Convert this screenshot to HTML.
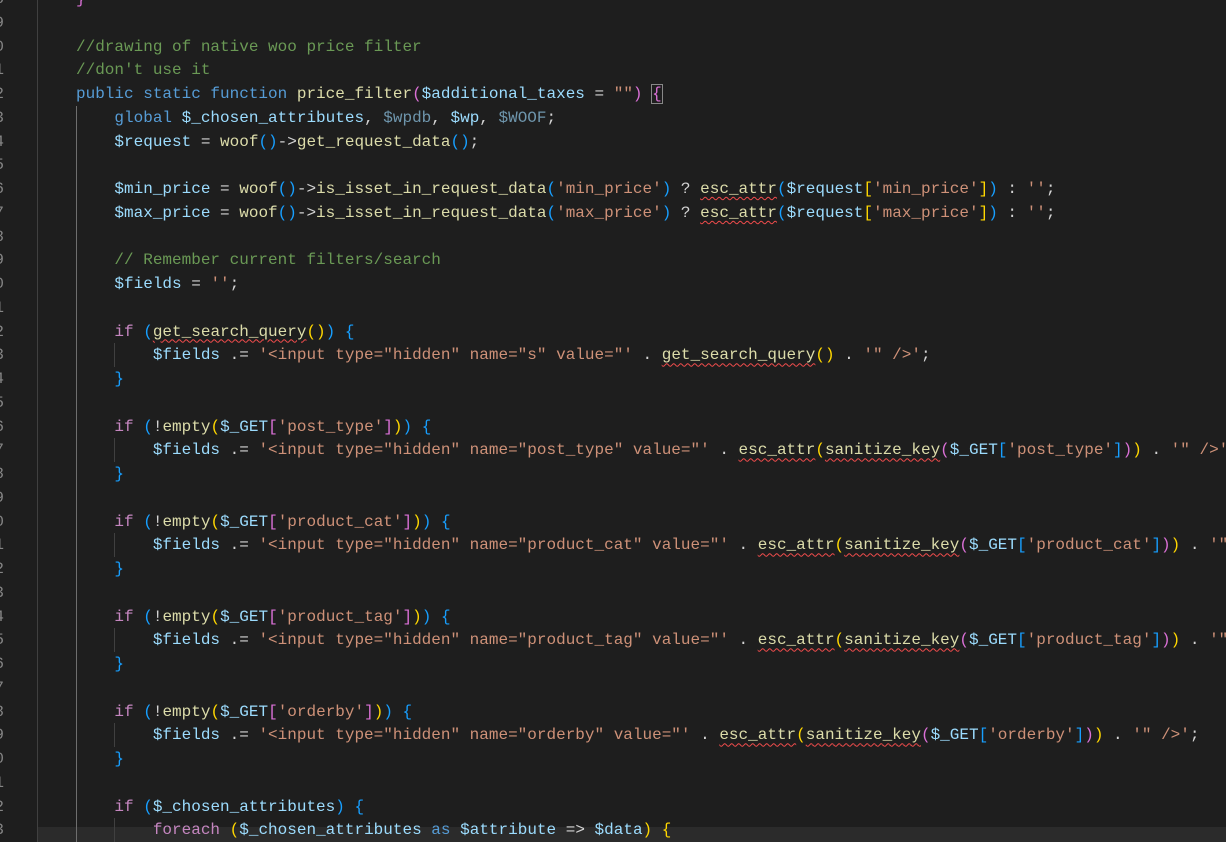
<!DOCTYPE html>
<html><head><meta charset="utf-8"><style>
html,body{margin:0;padding:0;background:#1e1e1e;width:1226px;height:842px;overflow:hidden}
body{font-family:"Liberation Mono",monospace;font-size:16px;}
#w{position:relative;width:1226px;height:842px;}
.r{position:absolute;left:37.6px;margin-top:1.5px;height:23.75px;line-height:23.75px;white-space:pre;color:#d4d4d4;font-family:"Liberation Mono",monospace;font-size:16px}
.n{position:absolute;left:-30px;margin-top:1.5px;width:34px;text-align:right;height:23.75px;line-height:23.75px;color:#858585;font-family:"Liberation Mono",monospace;font-size:16px}
.g{position:absolute;width:1px;background:#404040}
.c{color:#6a9955}.k{color:#569cd6}.f{color:#dcdcaa}.v{color:#9cdcfe}.d{color:#6f96ad}.s{color:#ce9178}.p{color:#c586c0}
.b1{color:#ffd700}.b2{color:#da70d6}.b3{color:#179fff}
.e{text-decoration:underline wavy #f14c4c;text-decoration-thickness:1px;text-underline-offset:3px}
.hl{position:absolute;left:37px;top:827px;width:1189px;height:24px;background:#2b2b2b}
.box{outline:1px solid #888;}
</style></head><body><div id="w">
<div class="hl"></div>
<div class="g" style="left:37px;top:0;height:842px"></div>
<div class="g" style="left:76px;top:106px;height:736px;background:#6e6e6e"></div>
<div class="g" style="left:114px;top:343px;height:24px"></div>
<div class="g" style="left:114px;top:438px;height:24px"></div>
<div class="g" style="left:114px;top:533px;height:24px"></div>
<div class="g" style="left:114px;top:628px;height:24px"></div>
<div class="g" style="left:114px;top:723px;height:24px"></div>
<div class="g" style="left:114px;top:818px;height:24px"></div>

<div class="n" style="top:-13.4px">98</div>
<div class="n" style="top:10.35px">99</div>
<div class="n" style="top:34.1px">100</div>
<div class="n" style="top:57.85px">101</div>
<div class="n" style="top:81.6px">102</div>
<div class="n" style="top:105.35px">103</div>
<div class="n" style="top:129.1px">104</div>
<div class="n" style="top:152.85px">105</div>
<div class="n" style="top:176.6px">106</div>
<div class="n" style="top:200.35px">107</div>
<div class="n" style="top:224.1px">108</div>
<div class="n" style="top:247.85px">109</div>
<div class="n" style="top:271.6px">110</div>
<div class="n" style="top:295.35px">111</div>
<div class="n" style="top:319.1px">112</div>
<div class="n" style="top:342.85px">113</div>
<div class="n" style="top:366.6px">114</div>
<div class="n" style="top:390.35px">115</div>
<div class="n" style="top:414.1px">116</div>
<div class="n" style="top:437.85px">117</div>
<div class="n" style="top:461.6px">118</div>
<div class="n" style="top:485.35px">119</div>
<div class="n" style="top:509.1px">120</div>
<div class="n" style="top:532.85px">121</div>
<div class="n" style="top:556.6px">122</div>
<div class="n" style="top:580.35px">123</div>
<div class="n" style="top:604.1px">124</div>
<div class="n" style="top:627.85px">125</div>
<div class="n" style="top:651.6px">126</div>
<div class="n" style="top:675.35px">127</div>
<div class="n" style="top:699.1px">128</div>
<div class="n" style="top:722.85px">129</div>
<div class="n" style="top:746.6px">130</div>
<div class="n" style="top:770.35px">131</div>
<div class="n" style="top:794.1px">132</div>
<div class="n" style="top:817.85px">133</div>

<div class="r" style="top:-13.4px">    <span class="b2">}</span></div>
<div class="r" style="top:34.1px">    <span class="c">//drawing of native woo price filter</span></div>
<div class="r" style="top:57.85px">    <span class="c">//don't use it</span></div>
<div class="r" style="top:81.6px">    <span class="k">public static function</span> <span class="f">price_filter</span><span class="b2">(</span><span class="v">$additional_taxes</span> = <span class="s">""</span><span class="b2">)</span> <span class="b2 box">{</span></div>
<div class="r" style="top:105.35px">        <span class="k">global</span> <span class="v">$_chosen_attributes</span>, <span class="d">$wpdb</span>, <span class="v">$wp</span>, <span class="d">$WOOF</span>;</div>
<div class="r" style="top:129.1px">        <span class="v">$request</span> = <span class="f">woof</span><span class="b3">()</span>-&gt;<span class="f">get_request_data</span><span class="b3">()</span>;</div>
<div class="r" style="top:176.6px">        <span class="v">$min_price</span> = <span class="f">woof</span><span class="b3">()</span>-&gt;<span class="f">is_isset_in_request_data</span><span class="b3">(</span><span class="s">'min_price'</span><span class="b3">)</span> ? <span class="f e">esc_attr</span><span class="b3">(</span><span class="v">$request</span><span class="b1">[</span><span class="s">'min_price'</span><span class="b1">]</span><span class="b3">)</span> : <span class="s">''</span>;</div>
<div class="r" style="top:200.35px">        <span class="v">$max_price</span> = <span class="f">woof</span><span class="b3">()</span>-&gt;<span class="f">is_isset_in_request_data</span><span class="b3">(</span><span class="s">'max_price'</span><span class="b3">)</span> ? <span class="f e">esc_attr</span><span class="b3">(</span><span class="v">$request</span><span class="b1">[</span><span class="s">'max_price'</span><span class="b1">]</span><span class="b3">)</span> : <span class="s">''</span>;</div>
<div class="r" style="top:247.85px">        <span class="c">// Remember current filters/search</span></div>
<div class="r" style="top:271.6px">        <span class="v">$fields</span> = <span class="s">''</span>;</div>
<div class="r" style="top:319.1px">        <span class="p">if</span> <span class="b3">(</span><span class="f e">get_search_query</span><span class="b1">()</span><span class="b3">)</span> <span class="b3">{</span></div>
<div class="r" style="top:342.85px">            <span class="v">$fields</span> .= <span class="s">'&lt;input type="hidden" name="s" value="'</span> . <span class="f e">get_search_query</span><span class="b1">()</span> . <span class="s">'" /&gt;'</span>;</div>
<div class="r" style="top:366.6px">        <span class="b3">}</span></div>
<div class="r" style="top:414.1px">        <span class="p">if</span> <span class="b3">(</span>!<span class="f">empty</span><span class="b1">(</span><span class="v">$_GET</span><span class="b2">[</span><span class="s">'post_type'</span><span class="b2">]</span><span class="b1">)</span><span class="b3">)</span> <span class="b3">{</span></div>
<div class="r" style="top:437.85px">            <span class="v">$fields</span> .= <span class="s">'&lt;input type="hidden" name="post_type" value="'</span> . <span class="f e">esc_attr</span><span class="b1">(</span><span class="f e">sanitize_key</span><span class="b2">(</span><span class="v">$_GET</span><span class="b3">[</span><span class="s">'post_type'</span><span class="b3">]</span><span class="b2">)</span><span class="b1">)</span> . <span class="s">'" /&gt;'</span>;</div>
<div class="r" style="top:461.6px">        <span class="b3">}</span></div>
<div class="r" style="top:509.1px">        <span class="p">if</span> <span class="b3">(</span>!<span class="f">empty</span><span class="b1">(</span><span class="v">$_GET</span><span class="b2">[</span><span class="s">'product_cat'</span><span class="b2">]</span><span class="b1">)</span><span class="b3">)</span> <span class="b3">{</span></div>
<div class="r" style="top:532.85px">            <span class="v">$fields</span> .= <span class="s">'&lt;input type="hidden" name="product_cat" value="'</span> . <span class="f e">esc_attr</span><span class="b1">(</span><span class="f e">sanitize_key</span><span class="b2">(</span><span class="v">$_GET</span><span class="b3">[</span><span class="s">'product_cat'</span><span class="b3">]</span><span class="b2">)</span><span class="b1">)</span> . <span class="s">'" /&gt;'</span>;</div>
<div class="r" style="top:556.6px">        <span class="b3">}</span></div>
<div class="r" style="top:604.1px">        <span class="p">if</span> <span class="b3">(</span>!<span class="f">empty</span><span class="b1">(</span><span class="v">$_GET</span><span class="b2">[</span><span class="s">'product_tag'</span><span class="b2">]</span><span class="b1">)</span><span class="b3">)</span> <span class="b3">{</span></div>
<div class="r" style="top:627.85px">            <span class="v">$fields</span> .= <span class="s">'&lt;input type="hidden" name="product_tag" value="'</span> . <span class="f e">esc_attr</span><span class="b1">(</span><span class="f e">sanitize_key</span><span class="b2">(</span><span class="v">$_GET</span><span class="b3">[</span><span class="s">'product_tag'</span><span class="b3">]</span><span class="b2">)</span><span class="b1">)</span> . <span class="s">'" /&gt;'</span>;</div>
<div class="r" style="top:651.6px">        <span class="b3">}</span></div>
<div class="r" style="top:699.1px">        <span class="p">if</span> <span class="b3">(</span>!<span class="f">empty</span><span class="b1">(</span><span class="v">$_GET</span><span class="b2">[</span><span class="s">'orderby'</span><span class="b2">]</span><span class="b1">)</span><span class="b3">)</span> <span class="b3">{</span></div>
<div class="r" style="top:722.85px">            <span class="v">$fields</span> .= <span class="s">'&lt;input type="hidden" name="orderby" value="'</span> . <span class="f e">esc_attr</span><span class="b1">(</span><span class="f e">sanitize_key</span><span class="b2">(</span><span class="v">$_GET</span><span class="b3">[</span><span class="s">'orderby'</span><span class="b3">]</span><span class="b2">)</span><span class="b1">)</span> . <span class="s">'" /&gt;'</span>;</div>
<div class="r" style="top:746.6px">        <span class="b3">}</span></div>
<div class="r" style="top:794.1px">        <span class="p">if</span> <span class="b3">(</span><span class="v">$_chosen_attributes</span><span class="b3">)</span> <span class="b3">{</span></div>
<div class="r" style="top:817.85px">            <span class="p">foreach</span> <span class="b1">(</span><span class="v">$_chosen_attributes</span> <span class="k">as</span> <span class="v">$attribute</span> =&gt; <span class="v">$data</span><span class="b1">)</span> <span class="b1">{</span></div>
</div>
</body></html>
